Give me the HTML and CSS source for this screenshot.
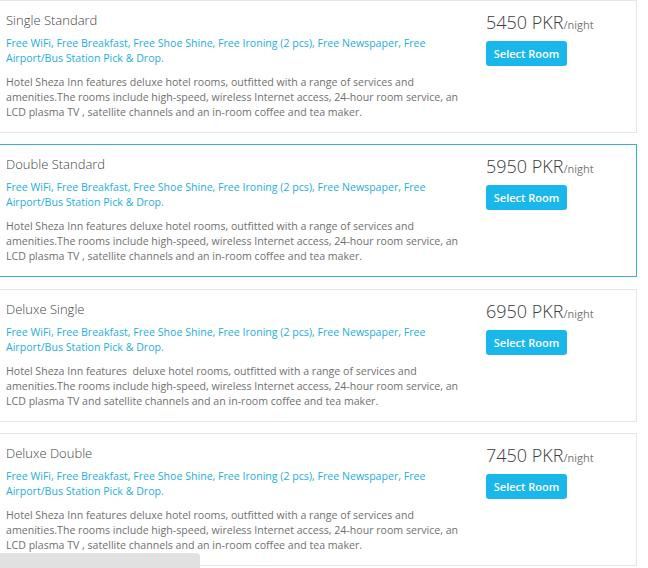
FILE: index.html
```html
<!DOCTYPE html>
<html>
<head>
<meta charset="utf-8">
<link rel="stylesheet" href="styles.css">
</head>
<body>
<div class="rooms">
  <div class="card">
    <div class="info">
      <div class="title">Single Standard</div>
      <div class="features">Free WiFi, Free Breakfast, Free Shoe Shine, Free Ironing (2 pcs), Free Newspaper, Free Airport/Bus Station Pick &amp; Drop.</div>
      <div class="desc">Hotel Sheza Inn features deluxe hotel rooms, outfitted with a range of services and amenities.The rooms include high-speed, wireless Internet access, 24-hour room service, an LCD plasma TV , satellite channels and an in-room coffee and tea maker.</div>
    </div>
    <div class="book">
      <div class="price">5450 PKR<span class="unit">/night</span></div>
      <button class="btn">Select Room</button>
    </div>
  </div>
  <div class="card active">
    <div class="info">
      <div class="title">Double Standard</div>
      <div class="features">Free WiFi, Free Breakfast, Free Shoe Shine, Free Ironing (2 pcs), Free Newspaper, Free Airport/Bus Station Pick &amp; Drop.</div>
      <div class="desc">Hotel Sheza Inn features deluxe hotel rooms, outfitted with a range of services and amenities.The rooms include high-speed, wireless Internet access, 24-hour room service, an LCD plasma TV , satellite channels and an in-room coffee and tea maker.</div>
    </div>
    <div class="book">
      <div class="price">5950 PKR<span class="unit">/night</span></div>
      <button class="btn">Select Room</button>
    </div>
  </div>
  <div class="card">
    <div class="info">
      <div class="title">Deluxe Single</div>
      <div class="features">Free WiFi, Free Breakfast, Free Shoe Shine, Free Ironing (2 pcs), Free Newspaper, Free Airport/Bus Station Pick &amp; Drop.</div>
      <div class="desc">Hotel Sheza Inn features&nbsp; deluxe hotel rooms, outfitted with a range of services and amenities.The rooms include high-speed, wireless Internet access, 24-hour room service, an LCD plasma TV and satellite channels and an in-room coffee and tea maker.</div>
    </div>
    <div class="book">
      <div class="price">6950 PKR<span class="unit">/night</span></div>
      <button class="btn">Select Room</button>
    </div>
  </div>
  <div class="card">
    <div class="info">
      <div class="title">Deluxe Double</div>
      <div class="features">Free WiFi, Free Breakfast, Free Shoe Shine, Free Ironing (2 pcs), Free Newspaper, Free Airport/Bus Station Pick &amp; Drop.</div>
      <div class="desc">Hotel Sheza Inn features deluxe hotel rooms, outfitted with a range of services and amenities.The rooms include high-speed, wireless Internet access, 24-hour room service, an LCD plasma TV , satellite channels and an in-room coffee and tea maker.</div>
    </div>
    <div class="book">
      <div class="price">7450 PKR<span class="unit">/night</span></div>
      <button class="btn">Select Room</button>
    </div>
  </div>
</div>
<div class="statusbar"></div>
</body>
</html>
```
FILE: styles.css
```css
html, body {
  margin: 0;
  padding: 0;
  background: #fff;
}
body {
  font-family: "Open Sans", "Noto Sans", sans-serif;
  color: #666;
}
.rooms {
  display: flex;
  flex-direction: column;
  gap: 11.33px;
  width: 638px;
  margin-left: -1px;
}
.card {
  display: grid;
  grid-template-columns: 471px 1fr;
  column-gap: 9px;
  height: 133px;
  box-sizing: border-box;
  border: 1px solid #e6e6e6;
  padding: 10px 6px 0 6px;
}
.card.active {
  border-color: #3aaed3;
}
.title {
  font-size: 13px;
  line-height: 18px;
  font-weight: 300;
  color: #444;
}
.features {
  margin-top: 7px;
  font-size: 10.6px;
  line-height: 15px;
  color: #1eaee0;
}
.desc {
  margin-top: 9px;
  font-size: 10.6px;
  line-height: 15px;
  color: #707070;
}
.book {
  display: flex;
  flex-direction: column;
  align-items: flex-start;
}
.price {
  margin-top: -1px;
  font-size: 18px;
  line-height: 24px;
  font-weight: 300;
  color: #3c3c3c;
}
.unit {
  font-size: 11px;
  font-weight: 400;
  color: #777;
}
.btn {
  margin-top: 4px;
  width: 81px;
  height: 25px;
  border: 0;
  border-radius: 3px;
  background: #1ab8ea;
  color: #fff;
  font-family: "Open Sans", "Noto Sans", sans-serif;
  font-size: 11px;
  font-weight: 600;
  padding: 0;
}
.statusbar {
  position: fixed;
  left: 0;
  bottom: 0;
  width: 200px;
  height: 15px;
  background: #e1e1e1;
  border-top-right-radius: 4px;
}
```
